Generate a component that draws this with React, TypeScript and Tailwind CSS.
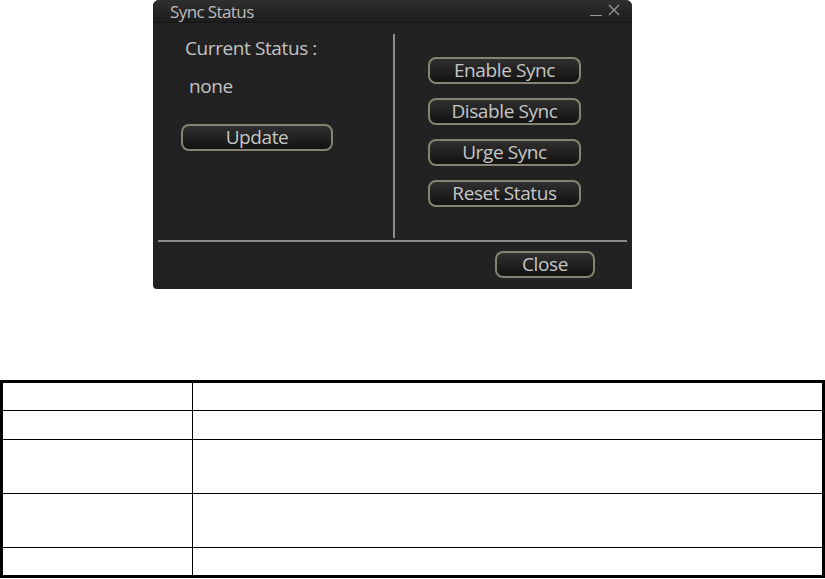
import React from "react"

const font = { fontFamily: '"Open Sans", "Noto Sans", sans-serif' }

const DlgButton = ({ label, className = "" }: { label: string; className?: string }) => {
  return (
    <div
      className={`h-[27px] flex items-center justify-center rounded-[8px] border-2 border-[#858371] bg-gradient-to-b from-[#303030] to-[#121212] text-[19px] leading-none tracking-[-0.4px] text-[#c6c6c6] ${className}`}
    >
      {label}
    </div>
  )
}

const rows = [27, 29, 54, 54, 28]

const App = () => {
  return (
    <div className="w-[825px] h-[579px] bg-white overflow-hidden" style={font}>
      <div className="ml-[153px] w-[479px] h-[289px] bg-[#222222] rounded-t-[6px] rounded-bl-[4px] flex flex-col">
        <div className="h-[23px] flex items-center justify-between pl-[17px] pr-[12px] rounded-t-[6px] bg-gradient-to-b from-[#2f2f2f] to-[#1c1c1c] border-b border-[#161616]">
          <span className="text-[17px] leading-none tracking-[-0.6px] text-[#bdbdbd]">Sync Status</span>
          <div className="flex items-end gap-[6px] h-[14px]">
            <div className="w-[12px] h-[1.5px] bg-[#9a9a9a] mb-[2px]" />
            <svg width="12" height="12" viewBox="0 0 12 12" className="mb-[2px]">
              <path d="M1 1 L11 11 M11 1 L1 11" stroke="#9a9a9a" strokeWidth="1.3" />
            </svg>
          </div>
        </div>
        <div className="flex pt-[11px] h-[215px]">
          <div className="w-[240px] flex flex-col">
            <span className="ml-[32px] mt-[2px] text-[19px] leading-[24px] tracking-[-0.4px] text-[#c2c2c2]">
              Current Status :
            </span>
            <span className="ml-[36px] mt-[14px] text-[19px] leading-[24px] tracking-[-0.4px] text-[#c2c2c2]">
              none
            </span>
            <DlgButton label="Update" className="ml-[28px] mt-[26px] w-[152px]" />
          </div>
          <div className="w-[2px] h-[204px] bg-[#8c8c8c]" />
          <div className="flex flex-col gap-[14px] pl-[33px] pt-[23px]">
            <DlgButton label="Enable Sync" className="w-[153px]" />
            <DlgButton label="Disable Sync" className="w-[153px]" />
            <DlgButton label="Urge Sync" className="w-[153px]" />
            <DlgButton label="Reset Status" className="w-[153px]" />
          </div>
        </div>
        <div className="mx-[5px] mt-[2px] h-[2px] bg-[#8c8c8c]" />
        <div className="flex justify-end pr-[37px] pt-[9px]">
          <DlgButton label="Close" className="w-[100px]" />
        </div>
      </div>

      <div className="mt-[91px] w-[825px] border-[3px] border-black">
        {rows.map((h, i) => (
          <div key={i} className={`flex ${i > 0 ? "border-t border-black" : ""}`} style={{ height: h }}>
            <div className="w-[190px] border-r border-black" />
            <div className="flex-1" />
          </div>
        ))}
      </div>
    </div>
  )
}

export default App
